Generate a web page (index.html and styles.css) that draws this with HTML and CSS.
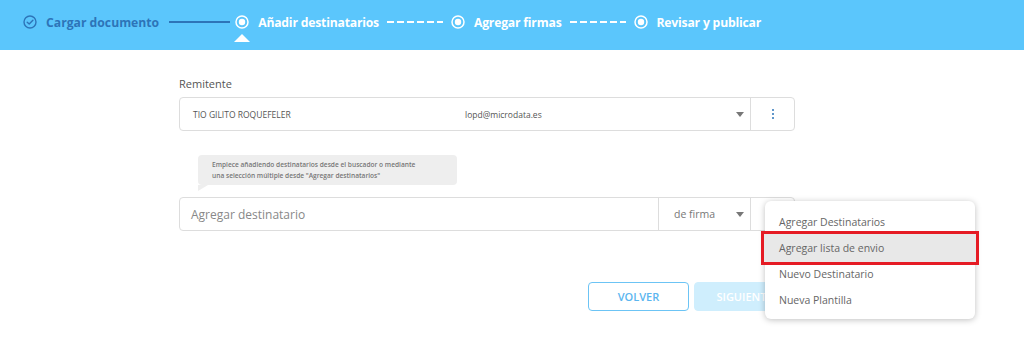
FILE: index.html
```html
<!DOCTYPE html>
<html lang="es">
<head>
    <meta charset="UTF-8">
    <meta name="viewport" content="width=device-width, initial-scale=1.0">
    <link rel="stylesheet" href="styles.css">
    <title>Añadir destinatarios</title>
</head>
<body>

    <!-- Steps bar -->
    <header class="steps">
        <div class="step done">
            <svg class="step-icon" viewBox="0 0 14 14" width="14" height="14">
                <circle cx="7" cy="7" r="6" fill="none" stroke="#2d74b8" stroke-width="1.4"/>
                <path d="M4.2 7.2 L6.2 9.1 L9.9 5.2" fill="none" stroke="#2d74b8" stroke-width="1.4" stroke-linecap="round" stroke-linejoin="round"/>
            </svg>
            <span>Cargar documento</span>
        </div>
        <span class="line solid"></span>
        <div class="step current">
            <svg class="step-icon" viewBox="0 0 14 14" width="14" height="14">
                <circle cx="7" cy="7" r="6" fill="none" stroke="#fff" stroke-width="1.5"/>
                <circle cx="7" cy="7" r="3.2" fill="#fff"/>
            </svg>
            <span>Añadir destinatarios</span>
            <i class="pointer"></i>
        </div>
        <span class="line dashed"></span>
        <div class="step">
            <svg class="step-icon" viewBox="0 0 14 14" width="14" height="14">
                <circle cx="7" cy="7" r="6" fill="none" stroke="#fff" stroke-width="1.5"/>
                <circle cx="7" cy="7" r="3.2" fill="#fff"/>
            </svg>
            <span>Agregar firmas</span>
        </div>
        <span class="line dashed"></span>
        <div class="step">
            <svg class="step-icon" viewBox="0 0 14 14" width="14" height="14">
                <circle cx="7" cy="7" r="6" fill="none" stroke="#fff" stroke-width="1.5"/>
                <circle cx="7" cy="7" r="3.2" fill="#fff"/>
            </svg>
            <span>Revisar y publicar</span>
        </div>
    </header>

    <main class="content">
        <label class="field-label">Remitente</label>
        <div class="box sender">
            <div class="sender-main">
                <span class="sender-name">TIO GILITO ROQUEFELER</span>
                <span class="sender-mail">lopd@microdata.es</span>
                <span class="caret"></span>
            </div>
            <div class="kebab-cell">
                <span class="kebab"><i></i><i></i><i></i></span>
            </div>
        </div>

        <div class="hint">
            Empiece añadiendo destinatarios desde el buscador o mediante<br>
            una selección múltiple desde "Agregar destinatarios"
        </div>

        <div class="box recipient">
            <div class="recipient-input">Agregar destinatario</div>
            <div class="recipient-type">
                <span>de firma</span>
                <span class="caret"></span>
            </div>
            <div class="kebab-cell"></div>

            <!-- Dropdown menu -->
            <ul class="menu">
                <li>Agregar Destinatarios</li>
                <li class="active">Agregar lista de envio</li>
                <li>Nuevo Destinatario</li>
                <li>Nueva Plantilla</li>
            </ul>
        </div>

        <div class="actions">
            <button class="btn outline">VOLVER</button>
            <button class="btn filled">SIGUIENTE</button>
        </div>
    </main>

</body>
</html>
```

FILE: styles.css
```css
body {
    margin: 0;
    background-color: #fff;
    font-family: 'Open Sans', 'Noto Sans', sans-serif;
    color: #666;
}

/* Steps bar */
.steps {
    height: 50px;
    background-color: #5bc6fc;
    display: flex;
    align-items: center;
    padding: 0 0 6px 23px;
    box-sizing: border-box;
}
.step {
    position: relative;
    display: flex;
    align-items: center;
    gap: 9px;
    color: #fff;
    font-size: 12.2px;
    font-weight: 700;
    letter-spacing: -0.2px;
}
.step.done {
    color: #2d74b8;
    letter-spacing: 0;
}
.step-icon {
    display: block;
}
.pointer {
    position: absolute;
    left: -1px;
    top: 20px;
    width: 0;
    height: 0;
    border-left: 8px solid transparent;
    border-right: 8px solid transparent;
    border-bottom: 8px solid #fff;
}
.line.solid {
    width: 61px;
    margin: 0 5px 0 10px;
    border-top: 2px solid #2d74b8;
}
.line.dashed {
    width: 56px;
    height: 2px;
    margin: 0 8px;
    background: repeating-linear-gradient(90deg, #fff 0 7px, transparent 7px 10px);
}

/* Content */
.content {
    width: 616px;
    margin-left: 179px;
    padding: 26px 0 30px;
}
.field-label {
    display: block;
    font-size: 11px;
    color: #555;
    margin-bottom: 6px;
}
.box {
    display: flex;
    height: 34px;
    border: 1px solid #ddd;
    border-radius: 4px;
    box-sizing: border-box;
}
.sender-main {
    flex: 1;
    display: flex;
    align-items: center;
    padding: 0 0 0 13px;
    font-size: 8.5px;
    color: #555;
}
.sender-name {
    width: 272px;
}
.sender-mail {
    flex: 1;
}
.caret {
    width: 0;
    height: 0;
    border-left: 4px solid transparent;
    border-right: 4px solid transparent;
    border-top: 5px solid #777;
    margin-right: 6px;
}
.kebab-cell {
    width: 44px;
    box-sizing: border-box;
    border-left: 1px solid #ddd;
    display: flex;
    align-items: center;
    justify-content: center;
}
.kebab {
    display: flex;
    flex-direction: column;
    gap: 2px;
}
.kebab i {
    width: 2px;
    height: 2px;
    background-color: #2d74b8;
    border-radius: 1px;
}

/* Hint bubble */
.hint {
    position: relative;
    width: 259px;
    margin: 24px 0 12px 19px;
    padding: 4px 0 4px 14px;
    box-sizing: border-box;
    background-color: #eee;
    border-radius: 4px;
    font-size: 6.6px;
    font-weight: 600;
    line-height: 11px;
    color: #777;
}
.hint::after {
    content: '';
    position: absolute;
    left: 0;
    bottom: -6px;
    border-top: 6px solid #eee;
    border-right: 10px solid transparent;
}

/* Recipient row */
.recipient {
    position: relative;
}
.recipient-input {
    flex: 1;
    display: flex;
    align-items: center;
    padding-left: 11px;
    font-size: 12px;
    color: #888;
}
.recipient-type {
    width: 92px;
    box-sizing: border-box;
    border-left: 1px solid #ddd;
    display: flex;
    align-items: center;
    justify-content: space-between;
    padding-left: 15px;
    font-size: 10.5px;
    color: #777;
}

/* Dropdown menu */
.menu {
    position: absolute;
    left: 585px;
    top: 3px;
    width: 210px;
    margin: 0;
    padding: 8px 0 6px;
    list-style: none;
    background-color: #fff;
    border-radius: 6px;
    box-shadow: 0 1px 6px rgba(0, 0, 0, 0.25);
    z-index: 10;
}
.menu li {
    height: 26px;
    display: flex;
    align-items: center;
    padding-left: 14px;
    font-size: 10.5px;
    color: #666;
}
.menu li.active {
    background-color: #e8e8e8;
    box-shadow: 0 0 0 1px #e8e8e8, 0 0 0 4px #e51b24;
}

/* Buttons */
.actions {
    display: flex;
    justify-content: flex-end;
    gap: 5px;
    margin-top: 51px;
}
.btn {
    width: 101px;
    height: 29px;
    border-radius: 4px;
    font-family: inherit;
    font-size: 11px;
    font-weight: 600;
}
.btn.outline {
    background-color: #fff;
    border: 1px solid #6cc4f5;
    color: #5bb6ef;
}
.btn.filled {
    background-color: #cfeefd;
    border: 1px solid #cfeefd;
    color: #fff;
}
```
